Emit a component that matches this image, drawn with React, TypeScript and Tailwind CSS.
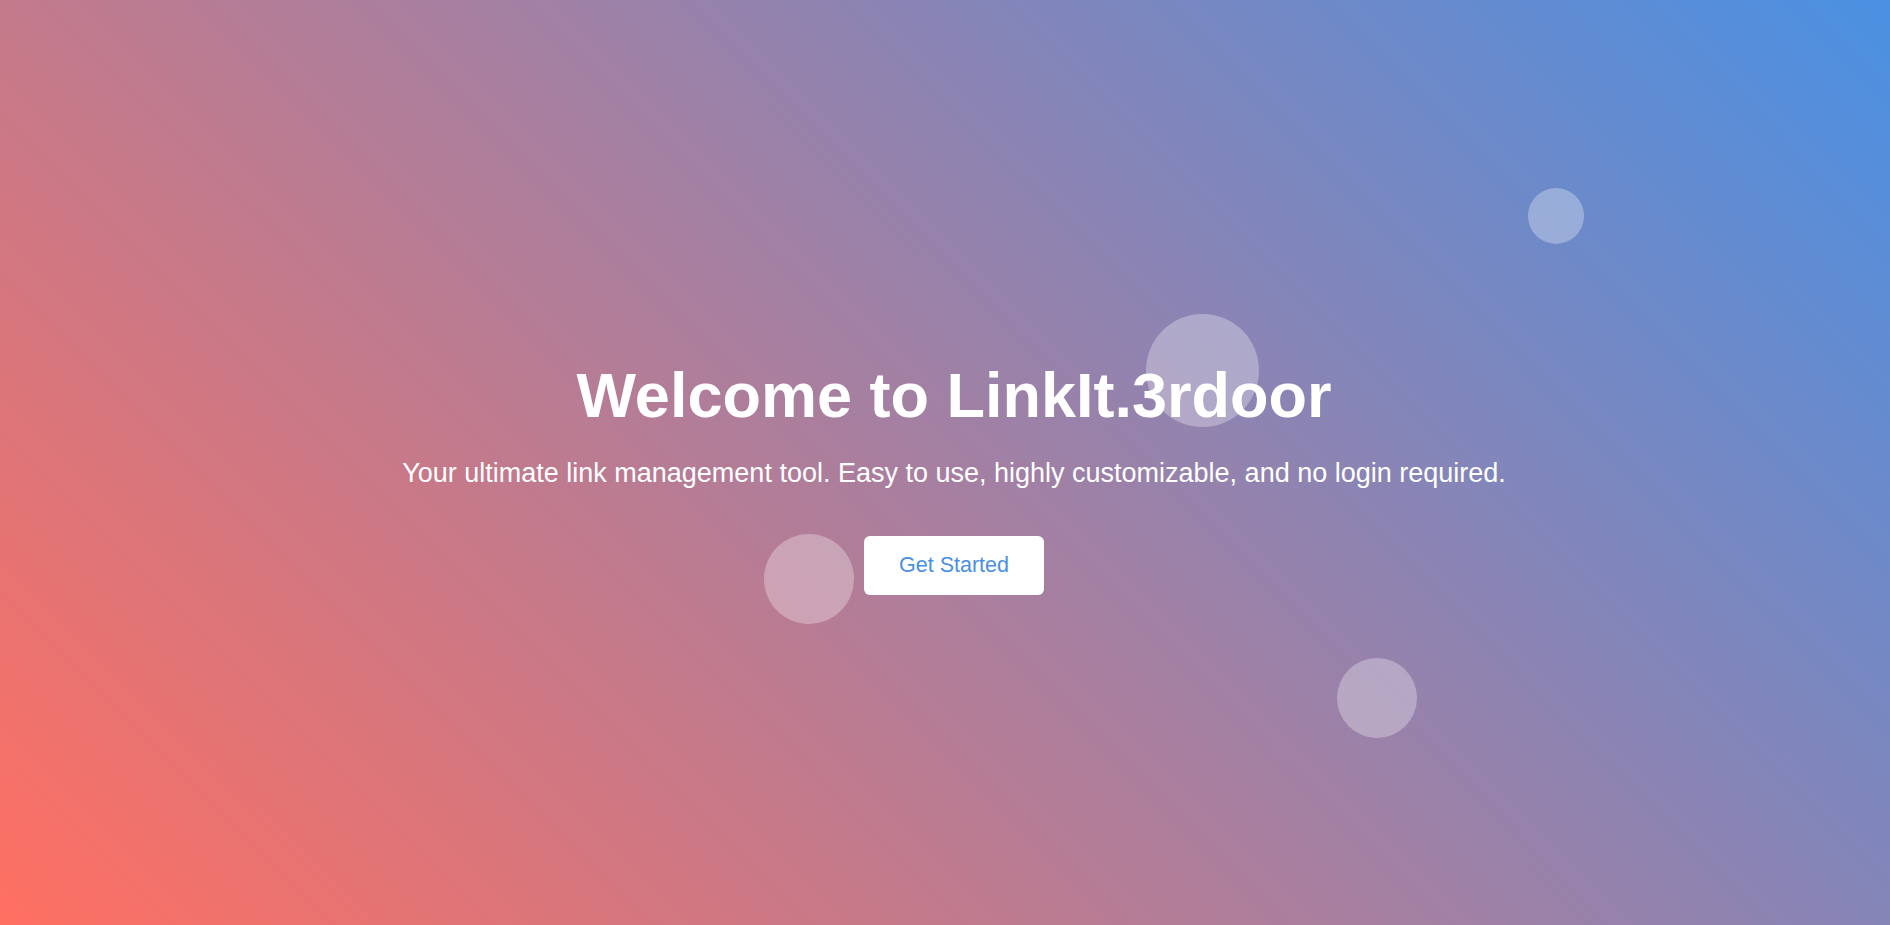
import React from 'react';

/**
 * Decorative floating bubbles on the hero background
 */
const BUBBLES = [
  { id: 'b1', className: 'left-[1528px] top-[188px] w-[56px] h-[56px]' },
  { id: 'b2', className: 'left-[1146px] top-[314px] w-[113px] h-[113px]' },
  { id: 'b3', className: 'left-[764px] top-[534px] w-[90px] h-[90px]' },
  { id: 'b4', className: 'left-[1337px] top-[658px] w-[80px] h-[80px]' },
];

export default function App() {
  return (
    <div
      className="relative min-h-screen h-[925px] overflow-hidden bg-[linear-gradient(45deg,#ff6f61,#4a90e2)] text-white"
      style={{ fontFamily: '"Liberation Sans", Arial, sans-serif' }}
    >
      {BUBBLES.map((b) => (
        <div
          key={b.id}
          className={`absolute rounded-full bg-white/30 ${b.className}`}
        />
      ))}

      <main className="relative flex h-full flex-col items-center justify-center pt-[29px] pl-[18px] text-center">
        <h1 className="text-[63px] leading-[72px] font-bold">
          Welcome to LinkIt.3rdoor
        </h1>
        <p className="mt-[27px] text-[27px] leading-[30.6px]">
          Your ultimate link management tool. Easy to use, highly customizable, and no login required.
        </p>
        <button
          type="button"
          className="mt-[47px] rounded-[6px] bg-white px-[35px] py-[17px] text-[21.5px] leading-[25px] text-[#4a90e2]"
        >
          Get Started
        </button>
      </main>
    </div>
  );
}
